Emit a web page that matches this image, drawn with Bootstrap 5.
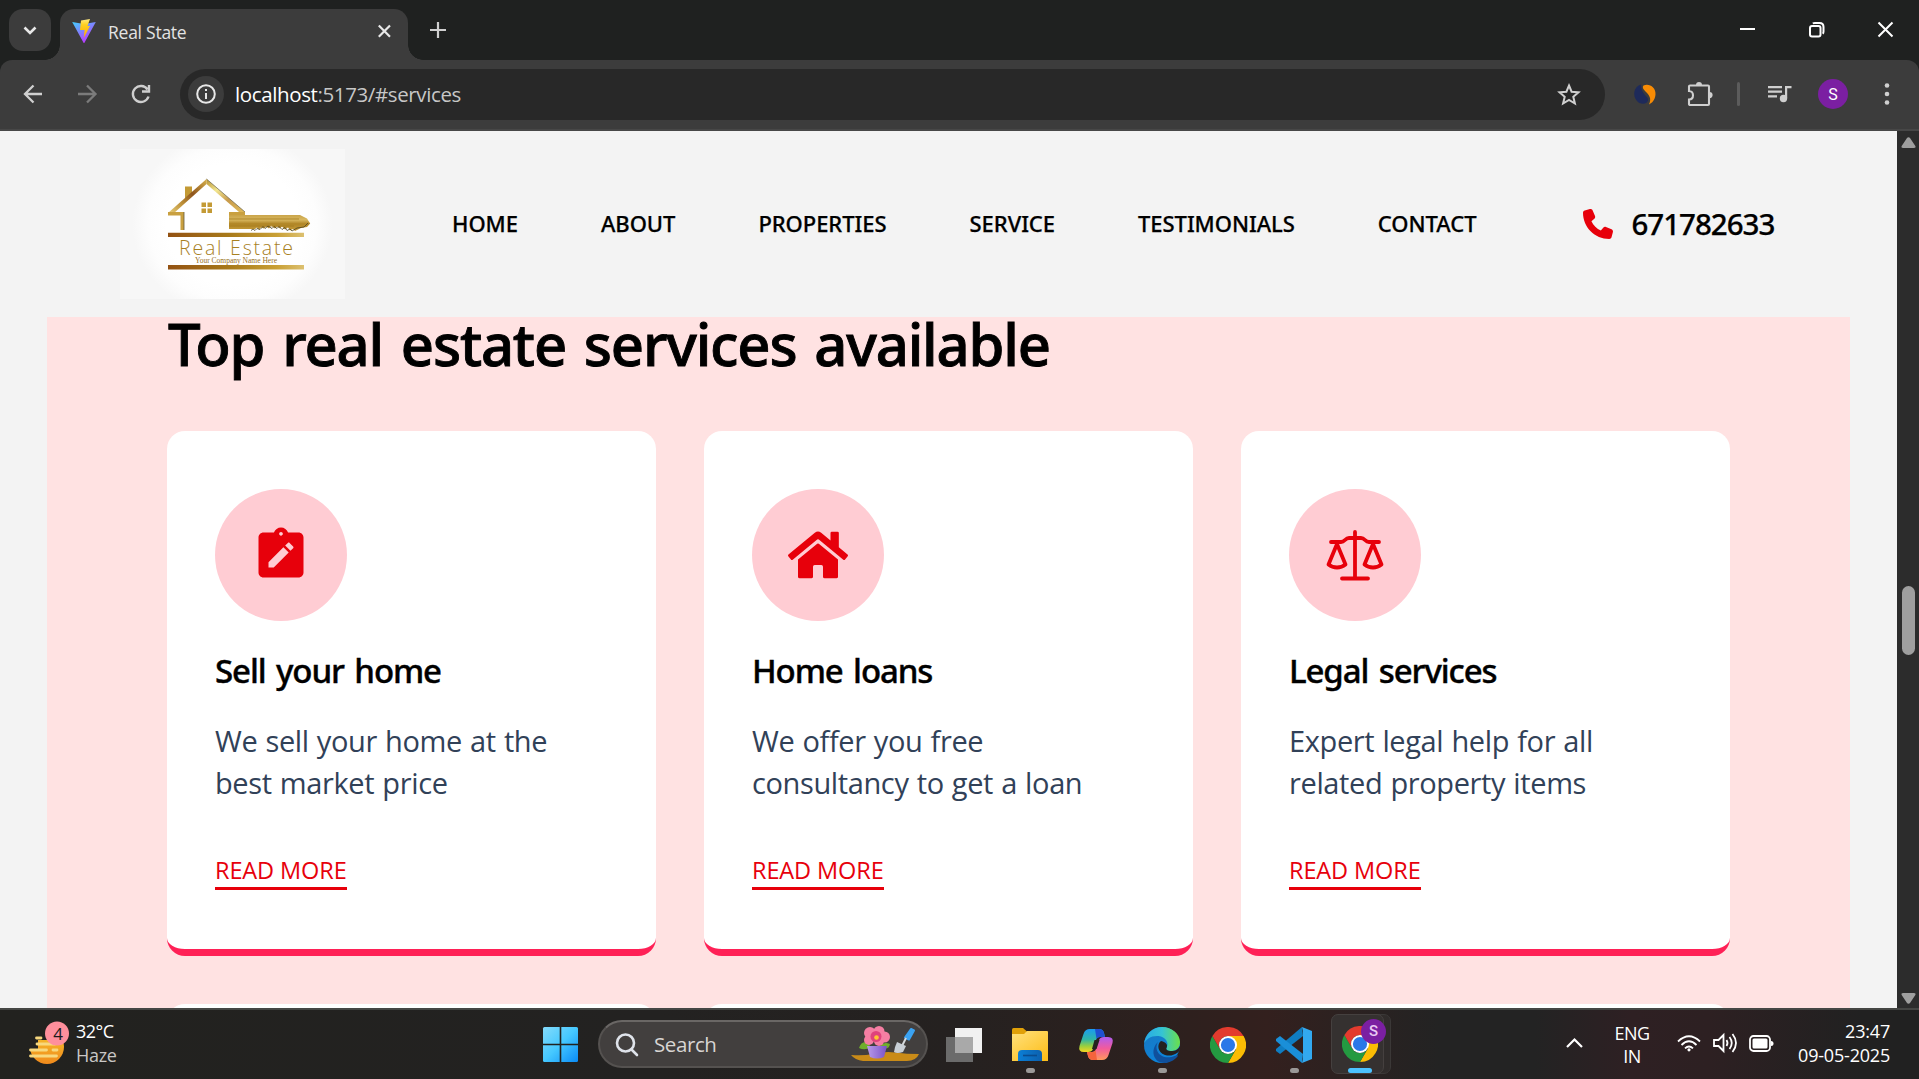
<!DOCTYPE html>
<html lang="en">
<head>
<meta charset="utf-8">
<title>Real State</title>
<link href="https://cdn.jsdelivr.net/npm/bootstrap@5.3.0/dist/css/bootstrap.min.css" rel="stylesheet">
<style>
body{width:1919px;height:1079px;overflow:hidden;background:#f3f3f3;font-family:"Open Sans","Noto Sans",sans-serif;color:#000}
svg{display:block;flex:none;overflow:visible}
/* browser chrome */
.tabstrip{height:60px;background:#1f2120;padding-left:9px}
.tab-search{width:42px;height:42px;margin-top:9px;border-radius:14px;background:#3c3c3c}
.tab-open{position:relative;width:348px;height:51px;margin:9px 0 0 9px;padding:0 10px 0 12px;border-radius:14px 14px 0 0;background:#3c3c3c;color:#e3e3e3;font-size:17.5px;letter-spacing:-.25px}
.tab-open::before,.tab-open::after{content:"";position:absolute;bottom:0;width:15px;height:15px}
.tab-open::before{left:-15px;background:radial-gradient(circle at 0 0,transparent 14.5px,#3c3c3c 15px)}
.tab-open::after{right:-15px;background:radial-gradient(circle at 100% 0,transparent 14.5px,#3c3c3c 15px)}
.tab-name{padding:0 0 5px 12px}
.new-tab{margin:22px 0 0 22px}
.win-buttons{padding:22px 26px 0 0;gap:54px}
.toolbar-band{background:#1f2120}
.toolbar{height:71px;padding:0 21px 1px 21px;background:#3c3c3c;border-radius:12px 12px 0 0;border-bottom:2px solid #474747}
.omnibox{width:1425px;height:51px;margin-left:27px;padding:0 24px 0 8px;border-radius:26px;background:#282828;font-size:20.5px;letter-spacing:-.38px;color:#c7c7c7}
.omnibox b{font-weight:400;color:#fff}
.info-dot{width:36px;height:36px;border-radius:50%;background:#3c3c3c;margin-right:11px}
.nav-icon{margin-left:30px}
.divider{width:3px;height:24px;margin:0 28px 0 24px;border-radius:2px;background:#5c5c5c}
.avatar{width:30px;height:30px;margin-left:26px;border-radius:50%;background:#7b1fa2;color:#fff;font:400 16px Roboto,sans-serif}
/* page */
.viewport{height:877px;overflow:hidden}
.page-area{width:1897px}
.site-header{height:186px;padding-left:120px}
.logo-art{width:225px;height:150px;background:radial-gradient(ellipse 100px 92px at 50% 50%,#fff 66%,#fdfdfd 84%,#f7f7f7 100%)}
.site-nav{margin:0 0 2px 107px;gap:83px;font:500 22px "Noto Sans",sans-serif;letter-spacing:-.05px;-webkit-text-stroke:.25px}
.site-nav a{color:#000;text-decoration:none}
.phone-icon{margin-left:107px}
.phone-no{margin:0 0 1px 18px;font:500 29.5px "Noto Sans",sans-serif;letter-spacing:-1px;-webkit-text-stroke:.25px}
.services{width:1803px;height:691px;margin-left:47px;padding:0 120px;background:#ffe2e2}
.services h1{margin:0 0 60px;padding-left:1px;font:500 58px/54px "Noto Sans",sans-serif;letter-spacing:-1.2px;word-spacing:4px;white-space:nowrap;-webkit-text-stroke:.9px}
.service-row{gap:48px}
.service-card{width:489px;height:525px;padding:58px 48px 0;background:#fff;border:0;border-bottom:7px solid #ff2056;border-radius:18px}
.icon-disc{width:132px;height:132px;border-radius:50%;background:#ffccd3;color:#e7000b}
.service-card h2{margin:25px 0 24px;font:500 33px/50px "Noto Sans",sans-serif;letter-spacing:-1.1px;word-spacing:3px;-webkit-text-stroke:.4px}
.service-card p{margin:0 0 48px;font-size:29px;line-height:42px;letter-spacing:-.38px;word-spacing:1px;color:#314158;white-space:nowrap}
.read-more{width:132px;height:38px;border-bottom:3px solid #e7000b;color:#e7000b;font-size:23.5px;line-height:36px;letter-spacing:-.1px;text-decoration:none;white-space:nowrap}
.scrollbar{width:22px;background:#2c2c2c;padding:6px 0 4px}
.thumb{width:13px;height:69px;margin-top:438px;border-radius:7px;background:#9f9f9f}
/* taskbar */
.taskbar{height:71px;border-top:2px solid #454644;background:linear-gradient(90deg,#22221f 0,#232221 34%,#252120 50%,#2e201e 62%,#33201e 66%,#232323 75%,#232323 80%,#2e2023 85%,#2d2022 89%,#212121 97%);color:#fff;font-size:18px;line-height:24px}
.weather{margin-left:29px;width:514px}
.weather-text{margin:0 0 3px 5px;letter-spacing:-.5px}
.weather-text div+div{color:#c9c7c5;letter-spacing:-.3px}
.task-search{width:330px;height:48px;margin:0 3px 1px 20px;padding:0 7px 0 16px;border:2px solid #555250;border-top-color:#6a6765;border-radius:24px;background:#423f3e;color:#d8d5d3;font-size:20.5px;letter-spacing:-.4px}
.app-slot{position:relative;width:66px;height:69px}
.run-dot{position:absolute;left:50%;top:58px;width:9px;height:5px;margin-left:-4.5px;border-radius:3px;background:#9b9998}
.app-live{position:absolute;left:4px;top:4px;width:53px;height:60px;border:1px solid #45403f;border-radius:7px;background:#353130}
.app-stack{position:absolute;left:14px;top:4px;width:50px;height:60px;border:1px solid #3b3837;border-radius:7px;background:#302c2b}
.live-icon{margin:16px 0 0 15px}
.live-dot{left:21px;width:24px;margin-left:0;background:#4cc2ff}
.task-badge{position:absolute;left:34px;top:9px;width:25px;height:25px;border-radius:50%;background:#7b1fa2;color:#e9c9f3;font:500 15px/24px Roboto,sans-serif}
.tray{margin-left:auto;padding:0 29px 3px 0}
.lang{width:36px;margin:3px 27px 0 31px;line-height:23px;letter-spacing:-.5px}
</style>
<script src="https://cdn.jsdelivr.net/npm/bootstrap@5.3.0/dist/js/bootstrap.bundle.min.js"></script>
</head>
<body class="d-flex flex-column">
<svg width="0" height="0" class="position-absolute">
  <defs>
    <linearGradient id="goldBar"><stop offset="0" stop-color="#935213"/><stop offset=".45" stop-color="#a87a1a"/><stop offset=".8" stop-color="#c9a035"/><stop offset="1" stop-color="#dcc070"/></linearGradient>
    <linearGradient id="goldKey" x2="0" y2="1"><stop offset="0" stop-color="#c9a44a"/><stop offset=".3" stop-color="#d9b860"/><stop offset=".55" stop-color="#b08525"/><stop offset="1" stop-color="#c69c3a"/></linearGradient>
    <linearGradient id="roofL" x1="0" y1="1" x2="1" y2="0"><stop offset="0" stop-color="#e8cf7a"/><stop offset=".35" stop-color="#b98a33"/><stop offset=".6" stop-color="#8e541c"/><stop offset="1" stop-color="#d6b04c"/></linearGradient>
    <linearGradient id="roofR" x2="1" y2="1"><stop offset="0" stop-color="#b8902f"/><stop offset=".3" stop-color="#f2e690"/><stop offset=".6" stop-color="#c79a4b"/><stop offset="1" stop-color="#e1bd5a"/></linearGradient>
    <linearGradient id="vite" x2=".6" y2="1"><stop offset="0" stop-color="#41d1ff"/><stop offset="1" stop-color="#bd34fe"/></linearGradient>
    <linearGradient id="bolt" x2="0" y2="1"><stop offset="0" stop-color="#ffea83"/><stop offset=".3" stop-color="#ffd020"/><stop offset="1" stop-color="#ffa800"/></linearGradient>
    <linearGradient id="sun" x2="0" y2="1"><stop offset="0" stop-color="#f7c52f"/><stop offset="1" stop-color="#f08a1c"/></linearGradient>
    <linearGradient id="win" x2="1" y2="1"><stop offset="0" stop-color="#84dbfb"/><stop offset=".5" stop-color="#45c8ff"/><stop offset="1" stop-color="#0a8bf5"/></linearGradient>
    <linearGradient id="folder" x2=".8" y2="1"><stop offset="0" stop-color="#ffe17d"/><stop offset="1" stop-color="#fdbf1d"/></linearGradient>
    <linearGradient id="drawer" x2="1"><stop offset="0" stop-color="#0b7fd6"/><stop offset="1" stop-color="#0c60ae"/></linearGradient>
    <linearGradient id="copA" x2="0" y2="1"><stop offset="0" stop-color="#1b9bf0"/><stop offset=".45" stop-color="#2fb5a6"/><stop offset=".75" stop-color="#9ccf3d"/><stop offset="1" stop-color="#f5d622"/></linearGradient>
    <linearGradient id="copB" x2="0" y2="1"><stop offset="0" stop-color="#b05cf0"/><stop offset=".5" stop-color="#f25b9c"/><stop offset="1" stop-color="#ff9a5c"/></linearGradient>
    <linearGradient id="edgeTop"><stop offset="0" stop-color="#27a9e6"/><stop offset=".5" stop-color="#35c3d4"/><stop offset="1" stop-color="#6be04a"/></linearGradient>
    <linearGradient id="edgeBlue" x2=".7" y2="1"><stop offset="0" stop-color="#1a76c0"/><stop offset="1" stop-color="#0a86dd"/></linearGradient>
    <linearGradient id="pot"><stop offset="0" stop-color="#b89bea"/><stop offset="1" stop-color="#7a52c8"/></linearGradient>
    <symbol id="chrome" viewBox="0 0 36 36">
      <path d="M18 9H33.600A18 18 0 0 1 18 36l7.800-13.500z" fill="#fbbc04"/>
      <path d="M2.400 9A18 18 0 0 0 18 36l7.800-13.500A9 9 0 0 1 10.200 22.500z" fill="#249a41"/>
      <path d="M2.400 9A18 18 0 0 1 33.600 9H18a9 9 0 0 0-7.800 13.500z" fill="#e33b2e"/>
      <circle cx="18" cy="18" r="9" fill="#fff"/><circle cx="18" cy="18" r="7.100" fill="#2a78e8"/>
    </symbol>
  </defs>
</svg>

<div class="tabstrip d-flex">
  <div class="tab-search d-flex align-items-center justify-content-center"><svg width="14" height="9" fill="none" stroke="#e8e8e8" stroke-width="2.600"><path d="M1.500 1.500 7 7l5.500-5.500"/></svg></div>
  <div class="tab-open d-flex align-items-center">
    <svg width="24" height="24" viewBox="0 0 24 24" class="mb-2"><path d="M.2 3 9 4.500h6L23.800 3 12.600 23.600a.7.7 0 0 1-1.200 0z" fill="url(#vite)"/><path d="m9 1.500 9-1.500-2.500 7H18l-6.200 12 .8-8H8z" fill="url(#bolt)"/></svg>
    <span class="tab-name flex-grow-1">Real State</span>
    <svg width="20" height="12" viewBox="0 0 20 12" fill="none" stroke="#e8e8e8" stroke-width="2.200" class="mb-2"><path d="M.8.5 12 11.700M12 .5.800 11.700"/></svg>
  </div>
  <svg width="16" height="16" fill="none" stroke="#d0d0d0" stroke-width="2.200" class="new-tab"><path d="M8 0v16M0 8h16"/></svg>
  <div class="win-buttons ms-auto d-flex">
    <svg width="15" height="15" fill="#fff"><path d="M0 6h15v2H0z"/></svg>
    <svg width="15" height="15" fill="none" stroke="#fff" stroke-width="2"><rect x="1" y="4" width="10.500" height="10.500" rx="2"/><path d="M3.800 1.500Q4.500 1 6 1h4.500q4 0 4 4v4.500q0 1.500-.8 2.200"/></svg>
    <svg width="15" height="15" fill="none" stroke="#fff" stroke-width="2"><path d="m.5.500 14 14m0-14-14 14"/></svg>
  </div>
</div>

<div class="toolbar-band">
<div class="toolbar d-flex align-items-center">
  <svg width="24" height="24" fill="none" stroke="#d0d0d0" stroke-width="2.300"><path d="M21 12H5M12.500 3.500 4 12l8.500 8.500"/></svg>
  <svg width="24" height="24" fill="none" stroke="#7b7b7b" stroke-width="2.300" class="nav-icon"><path d="M3 12h17M12 3.500l8.500 8.500-8.500 8.500"/></svg>
  <svg width="24" height="24" fill="none" stroke="#cfcfcf" stroke-width="2.400" class="nav-icon"><path d="M18.500 7.500A8 8 0 1 0 19.500 14.500M20 3v6.500h-7"/></svg>
  <div class="omnibox d-flex align-items-center">
    <div class="info-dot d-flex align-items-center justify-content-center"><svg width="20" height="20" fill="none" stroke="#e8e8e8" stroke-width="2"><circle cx="10" cy="10" r="8.800"/><path d="M10 9v6M10 5v2"/></svg></div>
    <span class="flex-grow-1"><b>localhost</b>:5173/#services</span>
    <svg width="24" height="23" viewBox="0 0 24 23" fill="none" stroke="#d0d0d0" stroke-width="2"><path d="m12 2.500 2.600 6.200 6.900.6-5.200 4.500 1.600 6.700-5.900-3.500-5.900 3.500 1.600-6.700L2.500 9.300l6.900-.6z"/></svg>
  </div>
  <svg width="22" height="21" viewBox="0 0 22 21" style="margin-left:29px"><path d="M7 .6C0 2 -2 12 3 17c3 4 10 3.500 11-.5C15 12 7 11 7 .6z" fill="#1e2a5a"/><path d="M9.500 1.500C15-1 22 3 21.500 10.500 21 16 18 19 15 20.500 18 14 15 11 11.500 7.500 9 5 8 3 9.500 1.500z" fill="#f88c05"/></svg>
  <svg width="26" height="26" viewBox="0 0 26 26" style="margin-left:31px"><path d="M3 4.500h18a1 1 0 0 1 1 1v17.500a1 1 0 0 1-1 1H3a1 1 0 0 1-1-1v-4.500c2.500 0 4-1.800 4-4.200S4.500 10 2 10V5.500a1 1 0 0 1 1-1z" fill="none" stroke="#cfcfcf" stroke-width="2.100"/><path d="M9 4a3 3 0 0 1 6 0zM22.500 11a3 3 0 0 1 0 6.200z" fill="#cfcfcf"/></svg>
  <div class="divider"></div>
  <svg width="24" height="18" viewBox="0 0 24 18" fill="#cfcfcf"><path d="M0 1h14v2.200H0zM0 5.600h14v2.200H0zM0 10.200h9v2.200H0zM17 1h6.500v2.200h-4.300V13h-2.200z"/><circle cx="15.500" cy="13.500" r="3.700"/></svg>
  <div class="avatar d-flex align-items-center justify-content-center">S</div>
  <svg width="6" height="22" fill="#d0d0d0" class="ms-auto me-2"><circle cx="3" cy="2.500" r="2.300"/><circle cx="3" cy="11" r="2.300"/><circle cx="3" cy="19.500" r="2.300"/></svg>
</div>
</div>

<div class="viewport d-flex">
  <div class="page-area">
    <header class="site-header d-flex align-items-center">
      <div class="logo-art"><svg width="225" height="150" viewBox="0 0 225 150">
        <path d="M65 37.500h7V44l-7 6z" fill="#c39a35"/>
        <path d="M48 64 86.500 30v5L54 64z" fill="url(#roofL)"/><path d="M86.500 30 125 63h-6L86.500 35z" fill="url(#roofR)"/>
        <path d="M86.500 30 125 63" stroke="#65604b" stroke-width=".7"/>
        <path d="M48 63h16v18h-3.500V66.500H48zM109 63h16v3h-16z" fill="#c9a040"/><path d="M64 63v18" stroke="#665a3a" stroke-width=".8"/>
        <path d="M81.500 53.500H86V58h-4.500zM87.500 53.500H92V58h-4.500zM81.500 59.500H86V64h-4.500zM87.500 59.500H92V64h-4.500z" fill="#c39a35"/>
        <path d="M109 66h71l7 3.500 3.200 5-3.200 3.500-6 1-6 3-2-2-3 1.500-2-3-3 2-3-3-2 2-3-2-2 2-4-3-2 3-3-2-2 2-3-1-2 2-2-2-2 1.500H109z" fill="url(#goldKey)"/>
        <path d="M109 70h70M109 77h65" stroke="#a57b20" stroke-width=".8"/>
        <path d="M131 81.500l2-1.500 2 1.500 2-2 3 1 3-3 2 2 3-2.500 4 2.500 2-2 3 2 2-2 3 3 3-2 2 3 3-1.500 2 2 5-3 7-1 4-4" fill="none" stroke="#4c421f" stroke-width=".8"/>
        <path d="M48 83.800h136v4.200H48zM48 116h136v4.400H48z" fill="url(#goldBar)"/>
        <text x="59" y="105.500" textLength="114" font-family="Open Sans" font-size="19.500" font-weight="300" fill="#a8811f">Real Estate</text>
        <text x="75" y="114" textLength="82" lengthAdjust="spacingAndGlyphs" font-family="Liberation Serif" font-size="9" fill="#98701a">Your Company Name Here</text>
      </svg></div>
      <nav class="site-nav d-flex"><a href="#">HOME</a><a href="#">ABOUT</a><a href="#">PROPERTIES</a><a href="#">SERVICE</a><a href="#">TESTIMONIALS</a><a href="#">CONTACT</a></nav>
      <svg width="30" height="30" viewBox="0 0 512 512" fill="#e7000b" class="phone-icon"><path d="M164.900 24.600c-7.700-18.600-28-28.500-47.400-23.200l-88 24C12.100 30.200 0 46 0 64c0 247.400 200.600 448 448 448 18 0 33.800-12.100 38.600-29.500l24-88c5.300-19.400-4.600-39.700-23.200-47.400l-96-40c-16.300-6.800-35.200-2.100-46.300 11.600L304.700 368C234.300 334.700 177.300 277.700 144 207.300L193.300 167c13.700-11.200 18.400-30 11.600-46.300l-40-96z"/></svg>
      <span class="phone-no">671782633</span>
    </header>
    <section class="services">
      <h1>Top real estate services available</h1>
      <div class="service-row d-flex">
        <article class="service-card card">
          <div class="icon-disc d-flex align-items-center justify-content-center"><svg width="60" height="60" viewBox="0 0 24 24" fill="currentColor"><path fill-rule="evenodd" d="M19 3h-4.180C14.400 1.840 13.300 1 12 1s-2.400.84-2.820 2H5c-1.100 0-2 .9-2 2v14c0 1.100.9 2 2 2h14c1.100 0 2-.9 2-2V5c0-1.100-.9-2-2-2zm-7-.25c.41 0 .75.34.75.75s-.34.750-.75.750-.75-.34-.75-.75.340-.75.750-.75zM9.100 17H7v-2.140l5.960-5.960 2.120 2.120L9.100 17zm7.750-7.730-1.060 1.060-2.120-2.120 1.060-1.060c.2-.2.510-.2.710 0l1.410 1.410c.2.200.2.510 0 .710z"/></svg></div>
          <h2>Sell your home</h2><p>We sell your home at the<br>best market price</p><a class="read-more" href="#">READ MORE</a>
        </article>
        <article class="service-card card">
          <div class="icon-disc d-flex align-items-center justify-content-center"><svg width="60" height="54" viewBox="0 0 576 512" fill="currentColor"><path d="M280.370 148.260 96 300.110V464a16 16 0 0 0 16 16l112.060-.29a16 16 0 0 0 15.920-16V368a16 16 0 0 1 16-16h64a16 16 0 0 1 16 16v95.640a16 16 0 0 0 16 16.050L464 480a16 16 0 0 0 16-16V300L295.670 148.260a12.190 12.190 0 0 0-15.300 0zM571.600 251.470 488 182.560V44.050a12 12 0 0 0-12-12h-56a12 12 0 0 0-12 12v72.610L318.470 43a48 48 0 0 0-61 0L4.340 251.470a12 12 0 0 0-1.600 16.900l25.500 31A12 12 0 0 0 45.150 301l235.220-193.740a12.190 12.190 0 0 1 15.300 0L530.900 301a12 12 0 0 0 16.900-1.600l25.500-31a12 12 0 0 0-1.700-16.930z"/></svg></div>
          <h2>Home loans</h2><p>We offer you free<br>consultancy to get a loan</p><a class="read-more" href="#">READ MORE</a>
        </article>
        <article class="service-card card">
          <div class="icon-disc d-flex align-items-center justify-content-center"><svg width="58" height="52" viewBox="0 0 58 52" fill="none" stroke="currentColor" stroke-width="3.800" stroke-linecap="round" stroke-linejoin="round"><path d="M29 3v46M16 49.500h26M5 13h10c4 0 4-4 8-4h12c4 0 4 4 8 4h10M11 15 2.500 35.500c5 4 12 4 17 0zM47 15l-8.500 20.500c5 4 12 4 17 0z"/></svg></div>
          <h2>Legal services</h2><p>Expert legal help for all<br>related property items</p><a class="read-more" href="#">READ MORE</a>
        </article>
      </div>
      <div class="service-row d-flex mt-5"><div class="service-card card"></div><div class="service-card card"></div><div class="service-card card"></div></div>
    </section>
  </div>
  <div class="scrollbar d-flex flex-column align-items-center">
    <svg width="15" height="11" fill="#9f9f9f"><path d="M6 1a1.800 1.800 0 0 1 3 0l5.500 8.200q.6 1.800-1.500 1.800H2q-2.100 0-1.500-1.800z"/></svg>
    <div class="thumb"></div>
    <svg width="15" height="11" fill="#9f9f9f" class="mt-auto"><path d="M6 10a1.800 1.800 0 0 0 3 0l5.500-8.200Q15.100 0 13 0H2Q-.1 0 .5 1.800z"/></svg>
  </div>
</div>

<footer class="taskbar d-flex align-items-center">
  <div class="weather d-flex align-items-center">
    <svg width="42" height="44" viewBox="0 0 42 44" class="mb-1"><circle cx="18" cy="26" r="17" fill="url(#sun)"/><path d="M0 8h18v11H0zM0 18h9v11H0z" fill="#22221f"/><path d="M7.500 17h4.500M8 23h18M1.500 29h16M24 29h4M1.500 35h26" stroke="#f7d87e" stroke-width="2.800" stroke-linecap="round"/><circle cx="28" cy="12.500" r="12" fill="#ff8f9c"/><text x="29" y="18.500" text-anchor="middle" font-size="17" fill="#1c1c1c">4</text></svg>
    <div class="weather-text"><div>32°C</div><div>Haze</div></div>
  </div>
  <svg width="35" height="35" viewBox="0 0 35 35"><path d="M1.500 0H33.500Q35 0 35 1.500V33.500Q35 35 33.500 35H1.500Q0 35 0 33.500V1.500Q0 0 1.500 0z" fill="url(#win)"/><path d="M17.500 0v35M0 17.500h35" stroke="#22221f" stroke-width="1.600"/></svg>
  <div class="task-search d-flex align-items-center">
    <svg width="22" height="23" fill="none" stroke="#dfe3ea" stroke-width="2.600"><circle cx="9.500" cy="10" r="8.500"/><path d="m15.500 16.500 5.500 5.500" stroke-linecap="round"/></svg>
    <span class="ms-3">Search</span>
    <svg width="68" height="36" viewBox="0 0 68 36" class="ms-auto"><path d="M0 29q12 1 22-1 12-3 22-1.500 12 1.500 24 1.500-3 7-12 7H12q-8-1-12-6z" fill="#c98b18"/><path d="M8 22q2-7 8-6l4 5q-6 4-12 1zM29 20q4-5 10-2-1 6-8 4z" fill="#6fae2c"/><path d="M16 20h20l-3 11q-7 3-14 0z" fill="url(#pot)"/><g fill="#f57ea3"><circle cx="19" cy="7" r="6"/><circle cx="28" cy="5.500" r="5.500"/><circle cx="33.500" cy="11" r="5.500"/><circle cx="18" cy="14" r="5"/><circle cx="28" cy="15" r="5"/></g><circle cx="25" cy="10.500" r="5.500" fill="#e0437c"/><circle cx="25.500" cy="11.500" r="2.300" fill="#ffc531"/><path d="m60 3 3 1.500-5 9-4-2z" fill="#3ba3f2" stroke="#3ba3f2" stroke-width="2" stroke-linejoin="round"/><path d="m55 12-4 8" stroke="#d5dade" stroke-width="2"/><path d="m46 16 9 4-3 6q-6 2-9 0 1-6 3-10z" fill="#c8cfd6"/></svg>
  </div>
  <div class="d-flex">
    <div class="app-slot d-flex align-items-center justify-content-center"><svg width="36" height="34"><path d="M9 0h27v25H9z" fill="#f1f1f1"/><path d="M0 9h27v25H0z" fill="#6b6b6b"/><path d="M9 9h18v16H9z" fill="#a9a9a9"/></svg></div>
    <div class="app-slot d-flex align-items-center justify-content-center"><svg width="36" height="33"><path d="M0 1.500Q0 0 1.500 0H11l4 3.500L13 8H0z" fill="#e0a008"/><path d="M0 6h12l3-3h20q1 0 1 1v29H0z" fill="url(#folder)"/><path d="M6 33v-7q0-4 4-4h16q4 0 4 4v7z" fill="url(#drawer)"/><path d="M11 27.500h14" stroke="#0a4c8e" stroke-width="1.600"/></svg><i class="run-dot"></i></div>
    <div class="app-slot d-flex align-items-center justify-content-center"><svg width="34" height="31" viewBox="0 0 34 31"><path d="M11 0h9q4 0 5 4l1 4h-5q-3 0-4 3l-3 9q-1 3-5 3H5q-6 0-4.500-6L4.500 5Q6 0 11 0z" fill="url(#copA)"/><path d="M16 0h4q4 0 5 4l1 4h-5q-2.500 0-3.500 2z" fill="#1f4fd0"/><path d="M23 31h-9q-4 0-5-4l-1-4h5q3 0 4-3l3-9q1-3 5-3h4q6 0 4.500 6l-4 12q-1.500 5-6.500 5z" fill="url(#copB)"/><path d="M18 31h-4q-4 0-5-4l-1-4h5q2.500 0 3.500-2z" fill="#f5643c"/><path d="m15.500 11-2.500 9h4.500l3-9z" fill="#25211f"/></svg></div>
    <div class="app-slot d-flex align-items-center justify-content-center"><svg width="36" height="36" viewBox="0 0 36 36"><circle cx="18" cy="18" r="18" fill="url(#edgeBlue)"/><path d="M0 17C1 7 9 0 18 0c10 0 18 7 18 15 0 6-4 9-8.500 9-4 0-6-1.500-5-3 3-5-1-11.500-8-12C7 8.500 2 12 0 17z" fill="url(#edgeTop)"/><path d="M14 15c-5 8 3 20 18 13.500 2-.8 2.500 0 1.500 1C29 35 22 37 17 35.500 8 33 7 21 14 15z" fill="#10509c"/><path d="M17 14c-4 3-4 11 4 14 5 1.500 9 0 12-2q2-1 3-4v-3c-2 4-5 5-8.500 5-4 0-6-1.500-5-3 1.500-3 0-5.500-5.500-7z" fill="#25211f"/></svg><i class="run-dot"></i></div>
    <div class="app-slot d-flex align-items-center justify-content-center"><svg width="36" height="36"><use href="#chrome"/></svg></div>
    <div class="app-slot d-flex align-items-center justify-content-center"><svg width="36" height="36" viewBox="0 0 36 36"><path d="M26 0 27 9 4 27 0 24v-2z" fill="#0f7dc2"/><path d="M0 12v2l26 22 1-9L4 9z" fill="#1a8fd8"/><path d="M26 0 36 4v28l-10 4 1-4V4z" fill="#32a9f0"/></svg><i class="run-dot"></i></div>
    <div class="app-slot"><div class="app-stack"></div><div class="app-live"></div><svg width="36" height="36" class="live-icon position-relative"><use href="#chrome"/></svg><div class="task-badge text-center">S</div><i class="run-dot live-dot"></i></div>
  </div>
  <div class="tray d-flex align-items-center">
    <svg width="17" height="10" fill="none" stroke="#fff" stroke-width="2.200"><path d="m1 9 7.500-7.500L16 9"/></svg>
    <div class="lang text-center">ENG<br>IN</div>
    <svg width="24" height="18" viewBox="0 0 24 18" fill="none" stroke="#fff" stroke-width="1.800"><path d="M1 7.500Q12-3 23 7.500M4.500 11Q12 3.500 19.500 11M8 14.300q4-3.600 8 0"/><circle cx="12" cy="15.800" r="1.600" fill="#fff" stroke="none"/></svg>
    <svg width="25" height="20" viewBox="0 0 25 20" fill="none" stroke="#fff" stroke-width="1.800" style="margin-left:12px"><path d="M1 7h4.500L10.500 2v16l-5-5H1zM13.500 7q2 3 0 6M16.500 4q4.500 6 0 12M19.500 1q7 9 0 18"/></svg>
    <svg width="25" height="17" viewBox="0 0 25 17" style="margin-left:11px"><rect x="1" y="1" width="20" height="15" rx="3.500" fill="none" stroke="#fff" stroke-width="1.800"/><rect x="3.500" y="3.500" width="15" height="10" rx="1.500" fill="#fff"/><path d="M22 6q2.500 0 2.500 2.500T22 11z" fill="#fff"/></svg>
    <div class="text-end" style="margin-left:24px;letter-spacing:-.2px">23:47<br>09-05-2025</div>
  </div>
</footer>
</body>
</html>
